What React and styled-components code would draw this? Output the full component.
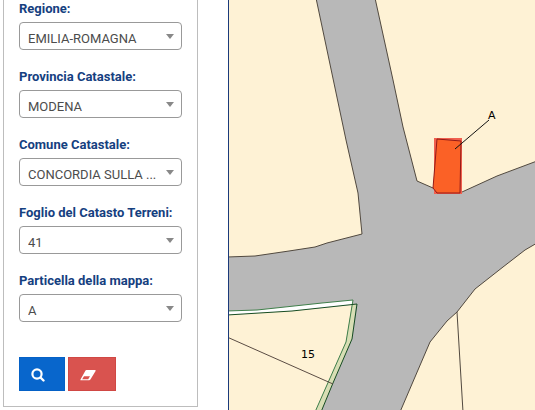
import React, { useState } from "react";
import styled, { createGlobalStyle } from "styled-components";

const GlobalStyle = createGlobalStyle`
  body {
    margin: 0;
    background: #ffffff;
    font-family: Roboto, "Open Sans", sans-serif;
  }
`;

const Page = styled.div`
  display: flex;
  align-items: flex-start;
  min-height: 100vh;
`;

const SearchPanel = styled.form`
  box-sizing: border-box;
  flex: 0 0 195px;
  margin: 0 30px 0 3px;
  padding: 0 15px 15px;
  border: 1px solid #bdbdbd;
  border-top: 0;
`;

const Field = styled.div`
  display: flex;
  flex-direction: column;
  gap: 4px;
  margin-bottom: 18px;
`;

const Label = styled.label`
  color: #15407f;
  font-size: 13px;
  font-weight: 700;
  line-height: 18px;
  white-space: nowrap;
`;

const SelectBox = styled.div`
  display: grid;
  grid-template-columns: 1fr 16px;
  align-items: center;
`;

const Select = styled.select`
  grid-area: 1 / 1 / 2 / 3;
  box-sizing: border-box;
  width: 100%;
  height: 28px;
  padding: 4px 20px 0 8px;
  border: 1px solid #999999;
  border-radius: 4px;
  appearance: none;
  background: #ffffff;
  color: #4c4c4c;
  font-family: inherit;
  font-size: 13px;
  text-overflow: ellipsis;
`;

const Arrow = styled.svg`
  grid-area: 1 / 2;
  width: 8px;
  height: 5px;
  fill: #888888;
  pointer-events: none;
`;

const Actions = styled.div`
  display: flex;
  gap: 3px;
  margin-top: 35px;
`;

const ActionButton = styled.button`
  display: flex;
  align-items: center;
  justify-content: flex-start;
  width: ${props => (props.$danger ? "48px" : "46px")};
  height: 34px;
  padding: 2px 0 0 11px;
  border: 1px solid ${props => (props.$danger ? "#d04844" : "#0561c6")};
  background: ${props => (props.$danger ? "#d9534f" : "#0866cc")};
  color: #ffffff;
  cursor: pointer;
`;

const MapPane = styled.main`
  flex: 1;
  min-width: 0;
  height: 100vh;
  border-left: 1px solid #1b3a7a;
  background: #b8b8b8;
`;

const MapDrawing = styled.svg`
  display: block;
  width: 100%;
  height: 100%;
  font-family: "DejaVu Sans", sans-serif;
  font-size: 11px;
`;

const fields = [
  { id: "regione", label: "Regione:", value: "EMILIA-ROMAGNA" },
  { id: "provincia", label: "Provincia Catastale:", value: "MODENA" },
  { id: "comune", label: "Comune Catastale:", value: "CONCORDIA SULLA ..." },
  { id: "foglio", label: "Foglio del Catasto Terreni:", value: "41" },
  { id: "particella", label: "Particella della mappa:", value: "A" }
];

const SelectField = ({ id, label, value }) => {
  const [selected, setSelected] = useState(value);

  return (
    <Field>
      <Label htmlFor={id}>{label}</Label>
      <SelectBox>
        <Select
          id={id}
          value={selected}
          onChange={event => setSelected(event.target.value)}
        >
          <option>{value}</option>
        </Select>
        <Arrow viewBox="0 0 8 5" aria-hidden="true">
          <path d="M0 0h8L4 5z" />
        </Arrow>
      </SelectBox>
    </Field>
  );
};

const SearchIcon = () => (
  <svg width="14" height="14" viewBox="0 0 14 14" aria-hidden="true">
    <circle
      cx="6"
      cy="6"
      r="4.6"
      fill="none"
      stroke="currentColor"
      strokeWidth="2.2"
    />
    <path
      d="M9.5 9.5l3 3"
      stroke="currentColor"
      strokeWidth="2.4"
      strokeLinecap="round"
    />
  </svg>
);

const EraserIcon = () => (
  <svg width="16" height="11" viewBox="0 0 16 11" aria-hidden="true">
    <path
      fill="currentColor"
      fillRule="evenodd"
      d="M6.400 0h8.600q1 0 .6 1L10.400 9.600q-.5.7-1.300.7H.9Q0 10.300.5 9.400L5.500.6Q5.900 0 6.400 0zM4 6.200L2.200 9.200H8.200L10 6.200z"
    />
  </svg>
);

const ParcelMap = () => (
  <MapDrawing
    viewBox="0 0 306 410"
    preserveAspectRatio="xMinYMin slice"
    role="img"
    aria-label="Mappa catastale"
  >
    <g fill="#fef2d5" stroke="#51493f">
      <path d="M-2 -2H87L117 140L129 193L133 234L98 243L86 247L60 251L26 256L-2 257z" />
      <path d="M146 -2L164 80L174 127L188 181L204 188L233 192L268 176L308 161V-2z" />
      <path d="M308 243L296 250L274 267L246 289L228 312L218 321L201 342L171 412H308z" />
      <path d="M228 312L234 412" />
    </g>

    <path d="M-2 311L28 310L93 303L124 300L123 305L63 311L-2 315z" fill="#ffffff" />
    <path d="M-2 315L63 311L123 305L117 342L86 412H-2z" fill="#fef2d5" />
    <path d="M123 305L127 304L123 339L104 383L92 412H86L117 342z" fill="#d8deb4" />
    <path
      d="M-2 311L28 310L93 303L124 300L117 342L86 412"
      fill="none"
      stroke="#3f7f4a"
    />
    <path
      d="M-2 315L63 311L128 304L123 339L104 383L92 412"
      fill="none"
      stroke="#174d22"
    />
    <path d="M-2 337L104 384" stroke="#5a4c43" />
    <text x="72" y="358">15</text>

    <path d="M205 138H233V194H205z" fill="#f0604f" />
    <path
      d="M208 139L232 141L231 193H208L204 188z"
      fill="#fb6126"
      stroke="#941a16"
    />
    <path d="M226 149L260 120" stroke="#111111" />
    <text x="259" y="119">A</text>
  </MapDrawing>
);

const App = () => (
  <>
    <GlobalStyle />
    <Page>
      <SearchPanel onSubmit={event => event.preventDefault()}>
        {fields.map(field => (
          <SelectField key={field.id} {...field} />
        ))}
        <Actions>
          <ActionButton type="submit" aria-label="Cerca">
            <SearchIcon />
          </ActionButton>
          <ActionButton type="reset" aria-label="Pulisci" $danger>
            <EraserIcon />
          </ActionButton>
        </Actions>
      </SearchPanel>
      <MapPane>
        <ParcelMap />
      </MapPane>
    </Page>
  </>
);

export default App;
